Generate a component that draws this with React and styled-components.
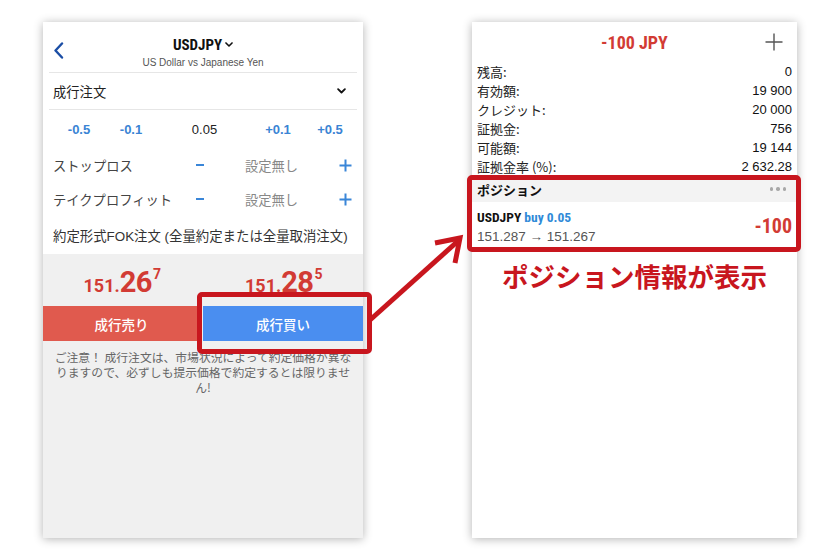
import React from "react";
import styled, { createGlobalStyle } from "styled-components";

const Global = createGlobalStyle`
  html, body { margin: 0; padding: 0; background: #fff; }
  body { font-family: "Liberation Sans", "Noto Sans CJK JP", sans-serif; color: #222; }
  * { box-sizing: border-box; }
`;

const JP = `"Noto Sans CJK JP", sans-serif`;
const NARROW = `"Liberation Sans Narrow", "Arial Narrow", "Roboto Condensed", "Liberation Sans", sans-serif`;
const RED = "#c8161e";

const Page = styled.div`
  position: relative;
  width: 840px;
  height: 560px;
  display: flex;
  align-items: flex-start;
  gap: 109px;
  padding: 22px 0 0 43px;
  overflow: hidden;
`;

const Panel = styled.div`
  width: ${(p) => p.$w}px;
  height: 516px;
  background: ${(p) => p.$bg || "#fff"};
  box-shadow: 0 1px 9px rgba(0, 0, 0, 0.3);
  display: flex;
  flex-direction: column;
`;

/* ---------- left panel ---------- */
const Header = styled.div`
  height: 50px;
  display: grid;
  grid-template-columns: 40px 1fr 40px;
  background: #fff;
`;
const Back = styled.svg`
  margin: 20px 0 0 10px;
`;
const TitleBlock = styled.div`
  display: flex;
  flex-direction: column;
  align-items: center;
  padding-top: 14px;
`;
const Title = styled.div`
  font-family: ${NARROW};
  font-weight: 700;
  font-size: 15px;
  line-height: 18px;
  color: #111;
  display: flex;
  align-items: center;
  gap: 3px;
`;
const Sub = styled.div`
  font-size: 10px;
  line-height: 13px;
  color: #555;
  margin-top: 2px;
`;
const Divider = styled.div`
  height: 1px;
  background: #e6e6e6;
  margin: 0 6px;
`;
const TopArea = styled.div`
  background: #fff;
`;
const OrderType = styled.div`
  height: 36px;
  display: flex;
  align-items: center;
  justify-content: space-between;
  padding: 0 17px 0 10px;
  font-family: ${JP};
  font-size: 13.3px;
  color: #222;
`;
const VolumeRow = styled.div`
  height: 38px;
  display: grid;
  grid-template-columns: 52px 52px 1fr 52px 52px;
  align-items: center;
  padding: 0 7px 0 10px;
  font-size: 13px;
  text-align: center;
`;
const Vol = styled.span`
  color: ${(p) => (p.$plain ? "#222" : "#3a84d4")};
  font-weight: ${(p) => (p.$plain ? 400 : 700)};
`;
const StopRow = styled.div`
  height: 34px;
  display: grid;
  grid-template-columns: 137px 20px 1fr 24px;
  align-items: center;
  padding: 0 6px 0 10px;
  font-family: ${JP};
  font-size: 13.3px;
  color: #444;
`;
const Minus = styled.span`
  justify-self: center;
  width: 8px;
  height: 2.5px;
  background: #3a86d8;
`;
const NotSet = styled.span`
  text-align: center;
  color: #888;
`;
const PlusIcon = styled.svg`
  justify-self: center;
`;
const FokRow = styled.div`
  height: 38px;
  display: flex;
  align-items: center;
  padding: 0 10px;
  font-family: "Liberation Sans", ${JP};
  font-size: 13.4px;
  color: #333;
`;
const TradeArea = styled.div`
  flex: 1;
  background: #f0f0f0;
  display: flex;
  flex-direction: column;
`;
const PriceRow = styled.div`
  height: 52px;
  padding-top: 8px;
  display: grid;
  grid-template-columns: 1fr 1fr;
  gap: 3px;
  align-items: center;
`;
const Price = styled.div`
  justify-self: center;
  font-family: Roboto, "Liberation Sans", sans-serif;
  font-weight: 700;
  color: #d23b34;
  line-height: 28px;
  display: flex;
  align-items: baseline;
`;
const PSmall = styled.span`
  font-size: 18px;
`;
const PBig = styled.span`
  font-size: 29px;
  letter-spacing: -0.5px;
`;
const PSup = styled.span`
  font-size: 14px;
  align-self: flex-start;
  line-height: 14px;
  margin-top: -1px;
  margin-left: 1px;
`;
const ButtonRow = styled.div`
  display: grid;
  grid-template-columns: 157px 1fr;
  gap: 3px;
`;
const TradeButton = styled.div`
  height: 35px;
  display: flex;
  align-items: center;
  justify-content: center;
  background: ${(p) => p.$bg};
  color: #fff;
  font-family: ${JP};
  font-weight: 500;
  font-size: 13.5px;
`;
const Notice = styled.div`
  padding: 8px 9px 0;
  text-align: center;
  font-family: ${JP};
  font-size: 11.8px;
  line-height: 15px;
  color: #666;
`;

/* ---------- right panel ---------- */
const RHeader = styled.div`
  height: 40px;
  display: grid;
  grid-template-columns: 40px 1fr 40px;
  align-items: center;
`;
const Balance = styled.div`
  grid-column: 2;
  text-align: center;
  font-family: ${NARROW};
  font-weight: 700;
  font-size: 18px;
  color: #d23b34;
`;
const AddIcon = styled.svg`
  justify-self: end;
  margin-right: 14px;
`;
const InfoList = styled.div`
  padding: 0 5px;
`;
const InfoRow = styled.div`
  height: 19px;
  display: flex;
  align-items: center;
  justify-content: space-between;
  font-size: 13px;
`;
const Label = styled.span`
  font-family: ${JP};
  color: #222;
`;
const Value = styled.span`
  font-family: "Liberation Sans", sans-serif;
  color: #111;
`;
const SectionBar = styled.div`
  height: 26px;
  background: #f3f3f3;
  display: flex;
  align-items: center;
  justify-content: space-between;
  padding: 0 11px 0 5px;
  font-family: ${JP};
  font-weight: 700;
  font-size: 13px;
  color: #111;
`;
const Dots = styled.span`
  display: flex;
  gap: 3px;
`;
const Dot = styled.span`
  width: 3.5px;
  height: 3.5px;
  border-radius: 50%;
  background: #a8a8a8;
`;
const PositionItem = styled.div`
  height: 48px;
  display: flex;
  align-items: center;
  justify-content: space-between;
  padding: 5px 5px 0;
`;
const PosLeft = styled.div`
  display: flex;
  flex-direction: column;
`;
const PosTitle = styled.div`
  font-family: ${NARROW};
  font-weight: 700;
  font-size: 13.5px;
  line-height: 17px;
  color: #111;
`;
const Blue = styled.span`
  color: #2f8ad8;
`;
const PosPrices = styled.div`
  font-size: 13.5px;
  line-height: 22px;
  color: #555;
`;
const Profit = styled.div`
  font-family: ${NARROW};
  font-weight: 700;
  font-size: 20px;
  color: #d23b34;
  margin-top: -6px;
`;
const Caption = styled.div`
  margin-top: 9px;
  line-height: 34px;
  text-align: center;
  font-family: ${JP};
  font-weight: 700;
  font-size: 26.5px;
  color: ${RED};
`;

/* ---------- overlays ---------- */
const Frame = styled.div`
  position: absolute;
  left: ${(p) => p.$x}px;
  top: ${(p) => p.$y}px;
  width: ${(p) => p.$w}px;
  height: ${(p) => p.$h}px;
  border: 5px solid ${RED};
  border-radius: 5px;
  pointer-events: none;
`;
const ArrowLayer = styled.svg`
  position: absolute;
  left: 0;
  top: 0;
  pointer-events: none;
`;

const Chevron = ({ size = 8 }) => (
  <svg width={size} height={size * 0.65} viewBox="0 0 10 6.5">
    <polyline points="1.2,1.2 5,5 8.8,1.2" fill="none" stroke="#111" strokeWidth="2" strokeLinecap="round" strokeLinejoin="round" />
  </svg>
);

const BluePlus = () => (
  <PlusIcon width="13" height="13" viewBox="0 0 13 13">
    <path d="M6.5 0.5v12M0.5 6.5h12" stroke="#3a86d8" strokeWidth="2" />
  </PlusIcon>
);

const info = [
  ["残高:", "0"],
  ["有効額:", "19 900"],
  ["クレジット:", "20 000"],
  ["証拠金:", "756"],
  ["可能額:", "19 144"],
  ["証拠金率 (%):", "2 632.28"],
];

export default function App() {
  return (
    <>
      <Global />
      <Page>
        <Panel $w={320} $bg="#fff">
          <Header>
            <Back width="12" height="17" viewBox="0 0 12 17">
              <polyline points="9,1.5 2.5,8.5 9,15.5" fill="none" stroke="#1b4ea5" strokeWidth="2.4" strokeLinecap="round" strokeLinejoin="round" />
            </Back>
            <TitleBlock>
              <Title>
                USDJPY <Chevron size={8} />
              </Title>
              <Sub>US Dollar vs Japanese Yen</Sub>
            </TitleBlock>
          </Header>
          <TopArea>
            <Divider />
            <OrderType>
              成行注文
              <Chevron size={9} />
            </OrderType>
            <Divider />
            <VolumeRow>
              <Vol>-0.5</Vol>
              <Vol>-0.1</Vol>
              <Vol $plain>0.05</Vol>
              <Vol>+0.1</Vol>
              <Vol>+0.5</Vol>
            </VolumeRow>
            <StopRow>
              <span>ストップロス</span>
              <Minus />
              <NotSet>設定無し</NotSet>
              <BluePlus />
            </StopRow>
            <StopRow>
              <span>テイクプロフィット</span>
              <Minus />
              <NotSet>設定無し</NotSet>
              <BluePlus />
            </StopRow>
            <FokRow>約定形式FOK注文 (全量約定または全量取消注文)</FokRow>
          </TopArea>
          <TradeArea>
            <PriceRow>
              <Price>
                <PSmall>151.</PSmall>
                <PBig>26</PBig>
                <PSup>7</PSup>
              </Price>
              <Price>
                <PSmall>151.</PSmall>
                <PBig>28</PBig>
                <PSup>5</PSup>
              </Price>
            </PriceRow>
            <ButtonRow>
              <TradeButton $bg="#e05a4e">成行売り</TradeButton>
              <TradeButton $bg="#4a8ef0">成行買い</TradeButton>
            </ButtonRow>
            <Notice>
              ご注意！ 成行注文は、市場状況によって約定価格が異なりますので、必ずしも提示価格で約定するとは限りません!
            </Notice>
          </TradeArea>
        </Panel>

        <Panel $w={325}>
          <RHeader>
            <Balance>-100 JPY</Balance>
            <AddIcon width="18" height="18" viewBox="0 0 18 18">
              <path d="M9 0.5v17M0.5 9h17" stroke="#555" strokeWidth="1.4" />
            </AddIcon>
          </RHeader>
          <InfoList>
            {info.map(([l, v]) => (
              <InfoRow key={l}>
                <Label>{l}</Label>
                <Value>{v}</Value>
              </InfoRow>
            ))}
          </InfoList>
          <SectionBar>
            ポジション
            <Dots>
              <Dot />
              <Dot />
              <Dot />
            </Dots>
          </SectionBar>
          <PositionItem>
            <PosLeft>
              <PosTitle>
                USDJPY <Blue>buy 0.05</Blue>
              </PosTitle>
              <PosPrices>151.287 → 151.267</PosPrices>
            </PosLeft>
            <Profit>-100</Profit>
          </PositionItem>
          <Caption>ポジション情報が表示</Caption>
        </Panel>

        <Frame $x={197} $y={292} $w={175} $h={62} />
        <Frame $x={467} $y={175} $w={334} $h={77} />
        <ArrowLayer width="840" height="560" viewBox="0 0 840 560">
          <line x1="370" y1="320" x2="458" y2="241" stroke={RED} strokeWidth="5" />
          <polyline points="435,243 460,238 455,263" fill="none" stroke={RED} strokeWidth="5" strokeLinejoin="miter" />
        </ArrowLayer>
      </Page>
    </>
  );
}
